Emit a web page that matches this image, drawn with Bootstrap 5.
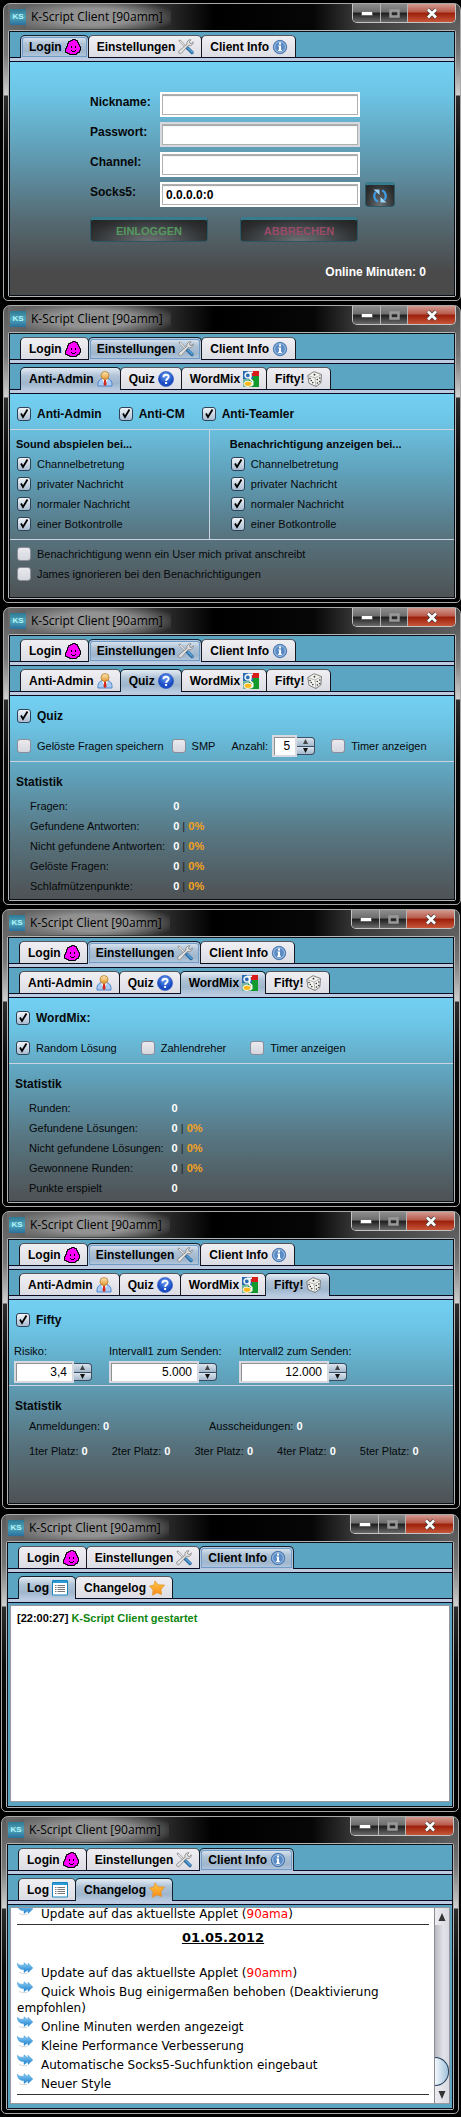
<!DOCTYPE html>
<html lang="de">
<head>
<meta charset="utf-8">
<meta name="viewport" content="width=device-width, initial-scale=1">
<title>K-Script Client</title>
<link rel="stylesheet" href="https://cdn.jsdelivr.net/npm/bootstrap@5.3.0/dist/css/bootstrap.min.css">
<script src="https://cdn.jsdelivr.net/npm/bootstrap@5.3.0/dist/js/bootstrap.bundle.min.js"></script>
<style>
body{background:#000;color:#06080a;font-family:"Liberation Sans",Arial,sans-serif;font-size:11px;line-height:20px}
svg{display:block;flex:none}
.b12{font-size:12px;font-weight:700}
.stage{padding:3px 0}
.grp-a{padding:0 0 0 3px}.grp-b{padding:0 1px 0 2px}.grp-c{padding:1px 2px 0 1px}
.win{min-height:298px;border:1px solid #a9a9a9;border-radius:7px 7px 5px 5px;padding:0 4px 3px;
 background:
 linear-gradient(180deg,#5a5a5a 0,#777 50px,#d0d0d0 91px,#2c2c2c 92px,#0a0a0a 150px,#000 100%) left/4px 100% no-repeat,
 linear-gradient(180deg,#4a4a4a 0,#777 50px,#d0d0d0 91px,#2c2c2c 92px,#0a0a0a 150px,#000 100%) right/4px 100% no-repeat,
 linear-gradient(90deg,#6a6a6a 0,#444 20%,#2a2a2a 36%,#000 46%,#060606 68%,#3c3c3c 78%,#606060 100%) top/100% 40px no-repeat,#000}
.tbar{height:26px;padding-left:2px}
.ksicon{width:16px;height:16px;margin-top:5px;background:linear-gradient(#2f7894,#4da5ba 50%,#2b6f9c);color:#b4f4fc;font-size:8px;font-weight:700;line-height:16px;text-align:center}
.tname{font-family:"Open Sans","Noto Sans",sans-serif;font-size:12px;line-height:25px;color:#000;padding:0 8px 0 5px;
 background:radial-gradient(ellipse 60% 75% at 46% 52%,#929292 45%,rgba(120,120,120,0) 100%)}
.wbtns{border:1px solid #c4c4c4;border-top:0;border-radius:0 0 5px 5px;overflow:hidden;height:19px}
.wbtns button{border:0;border-right:1px solid #b5b5b5;padding:0;width:28px;background:linear-gradient(#8d8d8d 0,#6d6d6d 45%,#1d1d1d 50%,#6a6a6a 100%)}
.wbtns button:nth-child(2){width:27px}
.wbtns .wclose{width:47px;border:0;background:linear-gradient(#d29a90 0,#b8594a 45%,#9c1e08 50%,#c6563a 100%)}
.client{border:1px solid #b4b4b4;border-radius:2px;background:#5ba4c2;flex:1 1 auto}
.client-in{border:1px solid #0a1018;flex:1 1 auto}
.tabrow{height:26px;padding:3px 0 0 10px;border-bottom:1px solid #0c0c20;flex-wrap:nowrap}
.tabrow .nav-link{height:23px;padding:0 7px 0 8px;margin:0 -1px 0 0;border:1px solid #17171f;border-top-color:#55555c;border-radius:5px 5px 0 0;
 color:#000;font-size:12px;font-weight:700;line-height:20px;background:linear-gradient(#efeff3,#dcdce4);border-bottom:1px solid #0c0c20;gap:3px;white-space:nowrap}
.tabrow .nav-link.active{color:#000;background:linear-gradient(#e3ebf3 0,#b0c3d6 35%,#9fb6cd 70%,#b9cbe0 100%);border-color:#12202e;border-bottom:0}
.tabrow.main .nav-link.active{box-shadow:inset 0 0 0 1px #b8c8dc,inset 0 0 0 2px #6f9cc9}
.rail{height:4px;background:#bccbe2;border-bottom:1px solid #0c0c20}
.pane{background:linear-gradient(#73d0f3 0,#6cc4e4 14%,#5f9fb8 40%,#57747f 70%,#4e5254 100%)}
.pane.dark-end{background:linear-gradient(#73d0f3 0,#6cc4e4 14%,#5f98ae 42%,#556a73 68%,#4a4a4a 90%)}
.rule{height:1px;background:#ccd3e0;flex:none}
.chk{gap:6px;height:20px;white-space:nowrap}
.chk .form-check-input{width:14px;height:14px;margin:0;border:1px solid #8d8d99;border-radius:3px;background:linear-gradient(#e9e9ee,#d6d6de);flex:none}
.chk .form-check-input:checked{border-color:#2f4358;background:url("data:image/svg+xml,%3Csvg xmlns='http://www.w3.org/2000/svg' viewBox='0 0 12 12'%3E%3Cpath d='M3 5.5 5 9 9.5 1.5' fill='none' stroke='%23000' stroke-width='1.8'/%3E%3C/svg%3E") center/12px 12px no-repeat,linear-gradient(#f0f4f8,#a9bdd2)}
.head-row{padding:10px 0 0 7px;gap:17px}
.head-row.closed{padding-bottom:5px}
.opt-row{padding:9px 7px 4px;min-height:35px}
.even{gap:24px}
.sec{padding:4px 0 5px 7px}
.sec .fw-bold{margin-left:-1px}
.stat-title{padding:10px 0 0 6px}
.login-form{padding:30px 0 0 80px}
.fields{display:grid;grid-template-columns:70px 200px auto;row-gap:5px}
.fields input{width:200px;height:25px;border:2px solid #fff;background:#fff;padding:0 4px;color:#000;font-weight:inherit;box-shadow:inset 0 0 0 1px #b0b0b0,inset 0 2px 1px #a0a0a0}
.fields input.dim{border-color:#d6d9df}
.fields label{line-height:20px}
.acts{gap:32px;margin-top:10px}
.glossy{border:1px solid #2b5864;border-top:3px solid #377c8c;border-radius:4px;background:radial-gradient(ellipse at 50% 100%,#6b7072 0,#2c2e30 75%,#222 100%);height:25px;padding:0;font-size:11px;font-weight:700;line-height:20px;width:118px}
.glossy.go{color:#55985f}.glossy.stop{color:#9a4b68}
.glossy.sq{width:30px;margin-left:5px}
.online{color:#fff;padding:20px 28px 0 0}
.half-l{flex:0 0 45%;border-right:1px solid #ccd3e0}
.half-r{padding-left:21px}
.stats{display:grid;grid-template-columns:max-content auto;column-gap:8px;margin:4px 0 0 20px}
.stats dt,.stats dd,.plain b{margin:0}
.stats dt{font-weight:400}
.stats dd,.plain b{font-weight:700;color:#fff}
.stats i{font-style:normal;color:#222;font-weight:400}
.stats em{font-style:normal;color:#f5a21c}
.spin-row{padding:11px 5px 2px}
.c95{width:95px}.c130{width:130px}
.spin{height:22px}
.spin input{height:22px;width:25px;border:2px solid #d6d9df;background:#fff;box-shadow:inset 1px 1px 0 #909090;padding:0 5px;text-align:right;font-size:12px;color:#000;border-radius:0}
.spin .w60{width:60px}.spin .w90{width:90px}
.spin div{width:18px;height:18px;border:1px solid #3b4f63;border-left:0;border-radius:0 4px 4px 0;overflow:hidden;background:#3b4f63;gap:1px}
.spin button{border:0;padding:0;flex:1;background:linear-gradient(#dbe4ee,#a4b8cc)}
.plain{padding-left:20px}
.plain .wide{width:180px}
.ranks{gap:24px;padding-top:5px}
.box{margin:2px 2px 3px;border:1px solid #97979f;background:#fff;height:197px;color:#000;overflow:hidden}
.log{font-weight:700;padding:2px 6px}
.log span{color:#0d860d}
.chg{font-family:"DejaVu Sans",Verdana,sans-serif;font-size:12px;line-height:16px;padding:0 5px 0 6px;min-width:0}
.chg ul{margin:0}
.chg li{padding-top:3px}
.chg li svg{display:inline-block;vertical-align:2px;margin:-4px 8px 0 0}
.chg .r{color:#f00}
.chg .bar{height:1px;background:#333;margin-top:2px}
.chg .prev{margin-top:-5px}
.chg .day{font-size:13px;padding:5px 0 16px}
.sbar{width:15px;background:linear-gradient(90deg,#b9b9c1,#e2e2e8 60%,#d8d8e0);border-left:1px solid #8a8a92}
.sbar button{border:0;padding:0;height:17px;background:linear-gradient(90deg,#ebebf0,#d9d9e0)}
.knob{width:14px;height:29px;border:1px solid #24415c;border-left:0;border-radius:0 14px 14px 0;background:linear-gradient(90deg,#f2f7fb,#a3c2dc)}
</style>
</head>
<body>
<svg width="0" height="0" class="position-absolute" aria-hidden="true">
<defs>
<radialGradient id="gBlue" cx=".5" cy=".3"><stop stop-color="#6ca0f4"/><stop offset="1" stop-color="#1b4cc4"/></radialGradient>
<linearGradient id="gStar" x2="0" y2="1"><stop stop-color="#ffc84a"/><stop offset="1" stop-color="#f98a14"/></linearGradient>
<linearGradient id="gArr" x2="0" y2="1"><stop stop-color="#8fd0f5"/><stop offset="1" stop-color="#1b7fce"/></linearGradient>
<linearGradient id="gHead" x2="0" y2="1"><stop stop-color="#ffe9b8"/><stop offset="1" stop-color="#e0972f"/></linearGradient>
<symbol id="login" viewBox="0 0 16 16"><path fill="#f0f" stroke="#000" d="M5.500 1.500h2v-1h3v1h2v2h1v2h1v2h1v4h-1v2h-2v1h-1v1h-7v-1h-2v-1h-2v-4h1v-2h1v-3h1v-2h2z"/><path d="M6 7h1v2H6zM10 7h1v2h-1zM6 11h1v1H6zM7 12h3v1H7zM10 11h1v1h-1z"/></symbol>
<symbol id="tools" viewBox="0 0 16 16"><path d="M1 1l2 .6L9 8 8 9 1.600 3z" fill="#e8e8e8" stroke="#777" stroke-width=".6"/><path d="M9.500 9l4.500 4.500" stroke="#2d6a9e" stroke-width="3.400" stroke-linecap="round"/><path d="M10 9l4.300 4.300" stroke="#5aa4dc" stroke-width="1.400" stroke-linecap="round"/><path d="M15.300 2.800a3.600 3.600 0 0 1-5 3.600L3.500 14.200a1.700 1.700 0 0 1-2.500-2.300L9 5.200A3.600 3.600 0 0 1 13 .7L11.500 2.500l.4 1.700 1.800.3z" fill="#e2e2e2" stroke="#777" stroke-width=".7"/></symbol>
<symbol id="info" viewBox="0 0 16 16"><circle cx="8" cy="8" r="6.700" fill="#5b8bc4" stroke="#3a6aa5" stroke-width=".8"/><circle cx="8" cy="8" r="5.400" fill="none" stroke="#b8d0ea" stroke-width=".8"/><path fill="#fff" d="M7 3.500h2v2H7zM6.300 6.500H9v4.300h.8V12H6.200v-1.200H7V7.600h-.7z"/></symbol>
<symbol id="admin" viewBox="0 0 16 16"><path d="M1 15c-.5-4 1.500-7 4-7.200h6c2.500.2 4.500 3.200 4 7.200z" fill="#a8ccf4" stroke="#3b74c4" stroke-width=".8"/><path d="M5 8l3 6 3-6z" fill="#fff"/><path d="M7.200 8.500h1.700l.7 5L8 15.300 6.500 13.500z" fill="#d42a1c"/><circle cx="8" cy="4.500" r="4" fill="url(#gHead)" stroke="#b06d1c" stroke-width=".7"/></symbol>
<symbol id="quiz" viewBox="0 0 16 16"><circle cx="8" cy="8" r="7.600" fill="url(#gBlue)" stroke="#1e4bb4" stroke-width=".5"/><path d="M5.400 6.200C5.400 2.800 10.800 3 10.600 6 10.500 7.800 8.200 7.800 8.100 9.900" fill="none" stroke="#fff" stroke-width="1.900"/><path fill="#fff" d="M7.100 11h2v2h-2z"/></symbol>
<symbol id="wordmix" viewBox="0 0 16 16"><path fill="#139a2c" d="M0 0h16v16H0z"/><path fill="#2a6ab0" d="M0 0h10v8H0z"/><path fill="#d81c1c" d="M9 0h7v5H9z"/><path fill="#6fb59a" d="M0 8h6v8H0z"/><circle cx="4.800" cy="4.300" r="2.700" fill="none" stroke="#e6eef5" stroke-width="1.700"/><path d="M5 1.300H10M7.800 2v4L7 7.800l2.700 2.500v3.200L7.500 15" fill="none" stroke="#fff" stroke-width="1.600"/><ellipse cx="5" cy="12.800" rx="4" ry="2.700" fill="#fbb91a" stroke="#fff" stroke-width=".9"/></symbol>
<symbol id="dice" viewBox="0 0 16 16"><path d="M7 .7l7.500 2.800-.7 8.500L9 15.500 2 12.300.8 4.500z" fill="#f4f4f0" stroke="#666" stroke-width=".8"/><path d="M.8 4.500L8 7l6.500-3.500M8 7l1 8.500" fill="none" stroke="#999" stroke-width=".7"/><g fill="#333"><circle cx="7.500" cy="3.700" r=".9"/><circle cx="3" cy="7.500" r=".8"/><circle cx="5.800" cy="11.600" r=".8"/><circle cx="4.300" cy="9.500" r=".8"/><circle cx="10.300" cy="8.500" r=".8"/><circle cx="12.800" cy="7" r=".8"/><circle cx="10.500" cy="12" r=".8"/><circle cx="12.700" cy="10.500" r=".8"/></g></symbol>
<symbol id="list" viewBox="0 0 16 16"><path fill="#fff" stroke="#1b86be" d="M.5.5h15v14.500H.5z"/><path fill="#2a9bd6" d="M1 1h14v2H1z"/><path d="M3 5.500h1.500M3 7.500h1.500M3 9.500h1.500M3 11.500h1.500M5.500 5.500H13M5.500 7.500H13M5.500 9.500H13M5.500 11.500H13" stroke="#777"/></symbol>
<symbol id="star" viewBox="0 0 16 16"><path d="M6 .8l3 4L15.500 5l-3.500 4.500.5 5L8 12.800l-4.500 2.500.5-5.500L.5 6l4.500-1z" fill="url(#gStar)" stroke="#e08a1a" stroke-width=".6"/></symbol>
<symbol id="arr" viewBox="0 0 16 13"><path d="M.3 1.200C2 3.500 4.500 3.300 7 3.200V.8l4 3.200V1.200l4.800 4.800L11 10.500V7.800l-4 2.700V7.600C3 7.600.5 5.500.3 1.200z" fill="url(#gArr)" stroke="#3a94d4" stroke-width=".5"/><path d="M2 10.500q4 2 8 1" fill="none" stroke="#ccc" stroke-width=".8"/></symbol>
<symbol id="sync" viewBox="0 0 16 16"><path d="M6 13.500C1.500 12 1.500 6 4 4M10 2.500c4.500 1.500 4.500 7.500 2 9.500" fill="none" stroke="#3f9be0" stroke-width="2.200"/><path d="M1.500 1.500H7.500V7zM14.500 14.500H8.500V9z" fill="#9ad4fa"/></symbol>
<symbol id="up" viewBox="0 0 7 5"><path d="M3.500 0L6 5H1z" fill="#444"/></symbol>
<symbol id="dn" viewBox="0 0 7 5"><path d="M3.500 5L6 0H1z" fill="#111"/></symbol>
</defs>
</svg>

<main class="stage d-flex flex-column gap-1">
<div class="grp-a d-flex flex-column gap-1">
<section class="win d-flex flex-column" data-main="0">
 <div class="client d-flex flex-column"><div class="client-in d-flex flex-column"><div class="pane dark-end flex-fill">
  <form class="login-form b12">
   <div class="fields">
    <label for="nick">Nickname:</label><input id="nick" type="text"><span></span>
    <label for="pass">Passwort:</label><input id="pass" class="dim" type="password"><span></span>
    <label for="chan">Channel:</label><input id="chan" type="text"><span></span>
    <label for="socks">Socks5:</label><input id="socks" type="text" value="0.0.0.0:0">
    <button type="button" class="glossy sq d-flex align-items-center justify-content-center" aria-label="Socks5 suchen"><svg width="16" height="16"><use href="#sync"/></svg></button>
   </div>
   <div class="acts d-flex"><button type="button" class="glossy go">EINLOGGEN</button><button type="button" class="glossy stop">ABBRECHEN</button></div>
   <div class="online text-end">Online Minuten: 0</div>
  </form>
 </div></div></div>
</section>

<section class="win d-flex flex-column" data-main="1" data-sub="0">
 <div class="client d-flex flex-column"><div class="client-in d-flex flex-column"><div class="pane flex-fill">
  <div class="head-row closed b12 d-flex">
   <label class="chk d-flex align-items-center"><input class="form-check-input" type="checkbox" checked>Anti-Admin</label>
   <label class="chk d-flex align-items-center"><input class="form-check-input" type="checkbox" checked>Anti-CM</label>
   <label class="chk d-flex align-items-center"><input class="form-check-input" type="checkbox" checked>Anti-Teamler</label>
  </div>
  <div class="rule"></div>
  <div class="d-flex">
   <div class="half-l sec">
    <div class="fw-bold">Sound abspielen bei...</div>
    <label class="chk d-flex align-items-center"><input class="form-check-input" type="checkbox" checked>Channelbetretung</label>
    <label class="chk d-flex align-items-center"><input class="form-check-input" type="checkbox" checked>privater Nachricht</label>
    <label class="chk d-flex align-items-center"><input class="form-check-input" type="checkbox" checked>normaler Nachricht</label>
    <label class="chk d-flex align-items-center"><input class="form-check-input" type="checkbox" checked>einer Botkontrolle</label>
   </div>
   <div class="sec half-r">
    <div class="fw-bold">Benachrichtigung anzeigen bei...</div>
    <label class="chk d-flex align-items-center"><input class="form-check-input" type="checkbox" checked>Channelbetretung</label>
    <label class="chk d-flex align-items-center"><input class="form-check-input" type="checkbox" checked>privater Nachricht</label>
    <label class="chk d-flex align-items-center"><input class="form-check-input" type="checkbox" checked>normaler Nachricht</label>
    <label class="chk d-flex align-items-center"><input class="form-check-input" type="checkbox" checked>einer Botkontrolle</label>
   </div>
  </div>
  <div class="rule"></div>
  <div class="sec">
   <label class="chk d-flex align-items-center"><input class="form-check-input" type="checkbox">Benachrichtigung wenn ein User mich privat anschreibt</label>
   <label class="chk d-flex align-items-center"><input class="form-check-input" type="checkbox">James ignorieren bei den Benachrichtigungen</label>
  </div>
 </div></div></div>
</section>

<section class="win d-flex flex-column" data-main="1" data-sub="1">
 <div class="client d-flex flex-column"><div class="client-in d-flex flex-column"><div class="pane flex-fill">
  <div class="head-row b12 d-flex">
   <label class="chk d-flex align-items-center"><input class="form-check-input" type="checkbox" checked>Quiz</label>
  </div>
  <div class="opt-row d-flex align-items-center">
   <label class="chk d-flex align-items-center"><input class="form-check-input" type="checkbox">Gelöste Fragen speichern</label>
   <label class="chk d-flex align-items-center ms-2"><input class="form-check-input" type="checkbox">SMP</label>
   <label for="anz" class="ms-3">Anzahl:</label>
   <div class="spin d-flex align-items-center ms-1"><input id="anz" type="text" value="5"><div class="d-flex flex-column"><button type="button" class="d-flex align-items-center justify-content-center" aria-label="Mehr"><svg width="7" height="5"><use href="#up"/></svg></button><button type="button" class="d-flex align-items-center justify-content-center" aria-label="Weniger"><svg width="7" height="5"><use href="#dn"/></svg></button></div></div>
   <label class="chk d-flex align-items-center ms-3"><input class="form-check-input" type="checkbox">Timer anzeigen</label>
  </div>
  <div class="rule"></div>
  <div class="b12 stat-title">Statistik</div>
  <dl class="stats">
   <dt>Fragen:</dt><dd>0</dd>
   <dt>Gefundene Antworten:</dt><dd>0 <i>|</i> <em>0%</em></dd>
   <dt>Nicht gefundene Antworten:</dt><dd>0 <i>|</i> <em>0%</em></dd>
   <dt>Gelöste Fragen:</dt><dd>0 <i>|</i> <em>0%</em></dd>
   <dt>Schlafmützenpunkte:</dt><dd>0 <i>|</i> <em>0%</em></dd>
  </dl>
 </div></div></div>
</section>
</div>

<div class="grp-b d-flex flex-column gap-1">
<section class="win d-flex flex-column" data-main="1" data-sub="2">
 <div class="client d-flex flex-column"><div class="client-in d-flex flex-column"><div class="pane flex-fill">
  <div class="head-row b12 d-flex">
   <label class="chk d-flex align-items-center"><input class="form-check-input" type="checkbox" checked>WordMix:</label>
  </div>
  <div class="opt-row even d-flex align-items-center">
   <label class="chk d-flex align-items-center"><input class="form-check-input" type="checkbox" checked>Random Lösung</label>
   <label class="chk d-flex align-items-center"><input class="form-check-input" type="checkbox">Zahlendreher</label>
   <label class="chk d-flex align-items-center"><input class="form-check-input" type="checkbox">Timer anzeigen</label>
  </div>
  <div class="rule"></div>
  <div class="b12 stat-title">Statistik</div>
  <dl class="stats">
   <dt>Runden:</dt><dd>0</dd>
   <dt>Gefundene Lösungen:</dt><dd>0 <i>|</i> <em>0%</em></dd>
   <dt>Nicht gefundene Lösungen:</dt><dd>0 <i>|</i> <em>0%</em></dd>
   <dt>Gewonnene Runden:</dt><dd>0 <i>|</i> <em>0%</em></dd>
   <dt>Punkte erspielt</dt><dd>0</dd>
  </dl>
 </div></div></div>
</section>

<section class="win d-flex flex-column" data-main="1" data-sub="3">
 <div class="client d-flex flex-column"><div class="client-in d-flex flex-column"><div class="pane flex-fill">
  <div class="head-row b12 d-flex">
   <label class="chk d-flex align-items-center"><input class="form-check-input" type="checkbox" checked>Fifty</label>
  </div>
  <div class="spin-row d-flex">
   <div class="c95"><label class="d-block" for="risk">Risiko:</label><div class="spin d-flex align-items-center"><input id="risk" class="w60" type="text" value="3,4"><div class="d-flex flex-column"><button type="button" class="d-flex align-items-center justify-content-center" aria-label="Mehr"><svg width="7" height="5"><use href="#up"/></svg></button><button type="button" class="d-flex align-items-center justify-content-center" aria-label="Weniger"><svg width="7" height="5"><use href="#dn"/></svg></button></div></div></div>
   <div class="c130"><label class="d-block" for="int1">Intervall1 zum Senden:</label><div class="spin d-flex align-items-center"><input id="int1" class="w90" type="text" value="5.000"><div class="d-flex flex-column"><button type="button" class="d-flex align-items-center justify-content-center" aria-label="Mehr"><svg width="7" height="5"><use href="#up"/></svg></button><button type="button" class="d-flex align-items-center justify-content-center" aria-label="Weniger"><svg width="7" height="5"><use href="#dn"/></svg></button></div></div></div>
   <div class="c130"><label class="d-block" for="int2">Intervall2 zum Senden:</label><div class="spin d-flex align-items-center"><input id="int2" class="w90" type="text" value="12.000"><div class="d-flex flex-column"><button type="button" class="d-flex align-items-center justify-content-center" aria-label="Mehr"><svg width="7" height="5"><use href="#up"/></svg></button><button type="button" class="d-flex align-items-center justify-content-center" aria-label="Weniger"><svg width="7" height="5"><use href="#dn"/></svg></button></div></div></div>
  </div>
  <div class="rule"></div>
  <div class="b12 stat-title">Statistik</div>
  <div class="plain d-flex"><span class="wide">Anmeldungen: <b>0</b></span><span>Ausscheidungen: <b>0</b></span></div>
  <div class="plain ranks d-flex"><span>1ter Platz: <b>0</b></span><span>2ter Platz: <b>0</b></span><span>3ter Platz: <b>0</b></span><span>4ter Platz: <b>0</b></span><span>5ter Platz: <b>0</b></span></div>
 </div></div></div>
</section>
</div>

<div class="grp-c d-flex flex-column gap-1">
<section class="win d-flex flex-column" data-main="2" data-sub="0">
 <div class="client d-flex flex-column"><div class="client-in d-flex flex-column">
  <div class="box log">[22:00:27] <span>K-Script Client gestartet</span></div>
 </div></div>
</section>

<section class="win d-flex flex-column" data-main="2" data-sub="1">
 <div class="client d-flex flex-column"><div class="client-in d-flex flex-column">
  <div class="box d-flex">
   <div class="chg flex-fill">
    <ul class="list-unstyled prev"><li><svg width="16" height="13"><use href="#arr"/></svg>Update auf das aktuellste Applet (<span class="r">90ama</span>)</li></ul>
    <div class="bar"></div>
    <div class="day text-center fw-bold text-decoration-underline">01.05.2012</div>
    <ul class="list-unstyled">
     <li><svg width="16" height="13"><use href="#arr"/></svg>Update auf das aktuellste Applet (<span class="r">90amm</span>)</li>
     <li><svg width="16" height="13"><use href="#arr"/></svg>Quick Whois Bug einigermaßen behoben (Deaktivierung empfohlen)</li>
     <li><svg width="16" height="13"><use href="#arr"/></svg>Online Minuten werden angezeigt</li>
     <li><svg width="16" height="13"><use href="#arr"/></svg>Kleine Performance Verbesserung</li>
     <li><svg width="16" height="13"><use href="#arr"/></svg>Automatische Socks5-Suchfunktion eingebaut</li>
     <li><svg width="16" height="13"><use href="#arr"/></svg>Neuer Style</li>
    </ul>
    <div class="bar"></div>
   </div>
   <div class="sbar d-flex flex-column flex-shrink-0">
    <button type="button" class="d-flex align-items-center justify-content-center" aria-label="Nach oben"><svg width="8" height="8" viewBox="0 0 8 8"><path d="M4 0l3.500 8h-7z" fill="#333"/></svg></button>
    <div class="knob mt-auto"></div>
    <button type="button" class="d-flex align-items-center justify-content-center" aria-label="Nach unten"><svg width="8" height="8" viewBox="0 0 8 8"><path d="M4 8l3.500-8h-7z" fill="#333"/></svg></button>
   </div>
  </div>
 </div></div>
</section>
</div>
</main>

<script>
// Every window shares the same title bar and tab strips; data-main / data-sub name the selected tabs.
const mainTabs = [["Login","login"],["Einstellungen","tools"],["Client Info","info"]];
const subTabs = {1:[["Anti-Admin","admin"],["Quiz","quiz"],["WordMix","wordmix"],["Fifty!","dice"]],2:[["Log","list"],["Changelog","star"]]};
const strip = (tabs, active, cls) => `<div class="nav nav-tabs tabrow ${cls}" role="tablist">` + tabs.map(([t,i],n) =>
  `<button type="button" role="tab" class="nav-link d-flex align-items-center ${n==active?'active':''}">${t}<svg width="16" height="16"><use href="#${i}"/></svg></button>`).join("") + `</div><div class="rail"></div>`;
document.querySelectorAll(".win").forEach(w => {
  const m = w.dataset.main, s = w.dataset.sub;
  w.querySelector(".client-in").insertAdjacentHTML("afterbegin", strip(mainTabs, m, "main") + (s !== undefined ? strip(subTabs[m], s, "") : ""));
  w.insertAdjacentHTML("afterbegin", `<header class="tbar d-flex align-items-start">
   <span class="ksicon flex-shrink-0">KS</span><span class="tname">K-Script Client [90amm]</span>
   <div class="wbtns d-flex ms-auto">
    <button type="button" class="d-flex align-items-center justify-content-center" aria-label="Minimieren"><svg width="12" height="5" viewBox="0 0 12 5"><path fill="#fff" stroke="#444" stroke-width=".6" d="M.5.5h11v4H.5z"/></svg></button>
    <button type="button" class="d-flex align-items-center justify-content-center" aria-label="Maximieren"><svg width="11" height="9" viewBox="0 0 11 9"><path fill="none" stroke="#999" stroke-width="2.500" d="M1.500 1.500h8v6h-8z"/></svg></button>
    <button type="button" class="wclose d-flex align-items-center justify-content-center" aria-label="Schließen"><svg width="12" height="11" viewBox="0 0 12 11"><path d="M2 1.500l8 8M10 1.500l-8 8" stroke="#444" stroke-width="4"/><path d="M2 1.500l8 8M10 1.500l-8 8" stroke="#fff" stroke-width="2.600"/></svg></button>
   </div></header>`);
});
</script>
</body>
</html>
